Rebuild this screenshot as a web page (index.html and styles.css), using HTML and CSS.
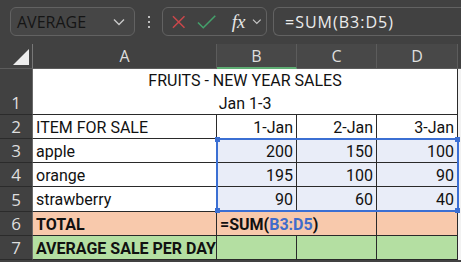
FILE: index.html
```html
<!DOCTYPE html>
<html lang="en">
<head>
    <meta charset="UTF-8">
    <title>Fruits - New Year Sales</title>
    <link rel="stylesheet" href="styles.css">
</head>
<body>
    <div class="toolbar">
        <div class="name-box">
            <span>AVERAGE</span>
            <svg class="chev" width="12" height="8" viewBox="0 0 12 8"><path d="M1 1.5l5 5 5-5" fill="none" stroke="currentColor" stroke-width="1.4"/></svg>
        </div>
        <div class="grip">
            <i></i><i></i><i></i>
        </div>
        <div class="fn-box">
            <svg class="cancel" width="16" height="16" viewBox="0 0 16 16"><path d="M2 2l12 12M14 2L2 14" stroke="currentColor" stroke-width="1.6" fill="none"/></svg>
            <svg class="enter" width="20" height="16" viewBox="0 0 20 16"><path d="M1 8.5l5.5 5.5L19 1.5" stroke="currentColor" stroke-width="1.6" fill="none"/></svg>
            <span class="fx">fx</span>
            <svg class="chev" width="10" height="7" viewBox="0 0 10 7"><path d="M1 1.5l4 4 4-4" fill="none" stroke="currentColor" stroke-width="1.2"/></svg>
        </div>
        <div class="formula">=SUM(B3:D5)</div>
    </div>

    <div class="sheet">
        <div class="grid">
            <!-- column headers -->
            <div class="ch corner">
                <svg width="18" height="18" viewBox="0 0 18 18"><path d="M17 1V17H1z" fill="#ececec"/></svg>
            </div>
            <div class="ch">A</div>
            <div class="ch on">B</div>
            <div class="ch on">C</div>
            <div class="ch on">D</div>
            <div class="ch rest"></div>

            <!-- row 1 -->
            <div class="rh bottom">1</div>
            <div class="c title">FRUITS - NEW YEAR SALES<br>Jan 1-3</div>
            <div class="c pad"></div>

            <!-- row 2 -->
            <div class="rh">2</div>
            <div class="c">ITEM FOR SALE</div>
            <div class="c num">1-Jan</div>
            <div class="c num">2-Jan</div>
            <div class="c num">3-Jan</div>
            <div class="c pad"></div>

            <!-- row 3 -->
            <div class="rh">3</div>
            <div class="c">apple</div>
            <div class="c num sel">200</div>
            <div class="c num sel">150</div>
            <div class="c num sel">100</div>
            <div class="c pad"></div>

            <!-- row 4 -->
            <div class="rh">4</div>
            <div class="c">orange</div>
            <div class="c num sel">195</div>
            <div class="c num sel">100</div>
            <div class="c num sel">90</div>
            <div class="c pad"></div>

            <!-- row 5 -->
            <div class="rh">5</div>
            <div class="c">strawberry</div>
            <div class="c num sel">90</div>
            <div class="c num sel">60</div>
            <div class="c num sel">40</div>
            <div class="c pad"></div>

            <!-- row 6 -->
            <div class="rh">6</div>
            <div class="c total bold">TOTAL</div>
            <div class="c total bold editing">=SUM(<span class="ref">B3:D5</span>)</div>
            <div class="c total"></div>
            <div class="c pad"></div>

            <!-- row 7 -->
            <div class="rh">7</div>
            <div class="c avg bold">AVERAGE SALE PER DAY</div>
            <div class="c avg"></div>
            <div class="c avg"></div>
            <div class="c avg"></div>
            <div class="c pad"></div>
        </div>
        <div class="selection"><i class="h tl"></i><i class="h tr"></i><i class="h bl"></i><i class="h br"></i></div>
    </div>
</body>
</html>
```

FILE: styles.css
```css
* {
    margin: 0;
    padding: 0;
    box-sizing: border-box;
}

body {
    background: #414141;
    width: 461px;
    height: 262px;
    overflow: hidden;
    font-family: "Open Sans", "Liberation Sans", sans-serif;
}

/* formula bar */
.toolbar {
    height: 44px;
    display: flex;
    align-items: center;
    padding: 0 0 1px 10px;
}

.name-box {
    width: 125px;
    height: 29px;
    border: 1px solid #626262;
    border-radius: 6px;
    background: #464646;
    display: flex;
    align-items: center;
    justify-content: space-between;
    padding: 0 9px 0 6px;
    font-size: 16px;
    color: #151515;
}

.chev {
    color: #c8c8c8;
}

.grip {
    width: 27px;
    display: flex;
    flex-direction: column;
    align-items: center;
    gap: 3px;
}

.grip i {
    width: 2px;
    height: 2px;
    background: #bdbdbd;
}

.fn-box {
    width: 105px;
    height: 29px;
    border: 1px solid #626262;
    border-radius: 6px;
    display: flex;
    align-items: center;
    padding: 0 4px 0 8px;
}

.cancel {
    color: #c9474b;
    margin-right: 11px;
}

.enter {
    color: #44a06b;
    margin-right: 15px;
}

.fx {
    font-family: "Liberation Serif", serif;
    font-style: italic;
    font-size: 19px;
    color: #e6e6e6;
    margin-right: 7px;
    line-height: 1;
}

.formula {
    flex: 1;
    height: 29px;
    margin-left: 6px;
    border: 1px solid #626262;
    border-right: none;
    border-radius: 6px 0 0 6px;
    padding: 0 0 0 11px;
    display: flex;
    align-items: center;
    font-size: 16px;
    letter-spacing: 1px;
    color: #ececec;
}

/* sheet */
.sheet {
    position: relative;
}

.grid {
    display: grid;
    grid-template-columns: 33px 184px 80px 80px 81px 1fr;
    grid-template-rows: 25px 46px 24px 24px 24px 25px 24px 24px 10px;
    font-family: "Liberation Sans Narrow", "Roboto", sans-serif;
    font-size: 16px;
    color: #111;
}

.ch {
    background: #414141;
    color: #dedede;
    font-family: "Open Sans", sans-serif;
    font-size: 16px;
    display: flex;
    align-items: center;
    justify-content: center;
    border-right: 1px solid #5c5c5c;
    border-bottom: 1px solid #5c5c5c;
}

.ch.on {
    background: #484848;
}

.ch.on:nth-child(3) {
    border-bottom: 2px solid #5fae74;
}

.ch.corner {
    justify-content: flex-end;
    align-items: flex-end;
    padding: 0 2px 2px 0;
    border-right: 1px solid #777;
}

.ch.rest {
    border-right: none;
}

.rh {
    background: #414141;
    color: #dedede;
    font-family: "Open Sans", sans-serif;
    font-size: 17px;
    display: flex;
    align-items: center;
    justify-content: center;
    border-bottom: 1px solid #2b2b2b;
    border-right: 1px solid #6a6a6a;
}

.rh.bottom {
    align-items: flex-end;
    padding-bottom: 0;
}

.c {
    background: #fff;
    border-right: 1px solid #2a2a2a;
    border-bottom: 1px solid #2a2a2a;
    display: flex;
    align-items: center;
    padding: 1px 3px 0 3px;
    white-space: nowrap;
    overflow: hidden;
}

.c.pad {
    background: #f2f2f2;
    border: none;
}

.title {
    grid-column: span 4;
    flex-direction: column;
    justify-content: center;
    text-align: center;
    line-height: 23px;
    padding-top: 0;
}

.num {
    justify-content: flex-end;
}

.sel {
    background: #e9edf8;
}

.bold {
    font-weight: 700;
}

.total {
    background: #f8c9ac;
}

.editing {
    grid-column: span 2;
    overflow: visible;
}

.ref {
    color: #3f6ccb;
}

.avg {
    background: #b4dfa2;
}

.selection {
    position: absolute;
    left: 216px;
    top: 94px;
    width: 243px;
    height: 74px;
    border: 2px solid #3b6fd3;
    pointer-events: none;
}

.h {
    position: absolute;
    width: 5px;
    height: 5px;
    background: #3b6fd3;
}

.tl { left: -3px; top: -3px; }
.tr { right: -3px; top: -3px; }
.bl { left: -3px; bottom: -3px; }
.br { right: -3px; bottom: -3px; }
```
